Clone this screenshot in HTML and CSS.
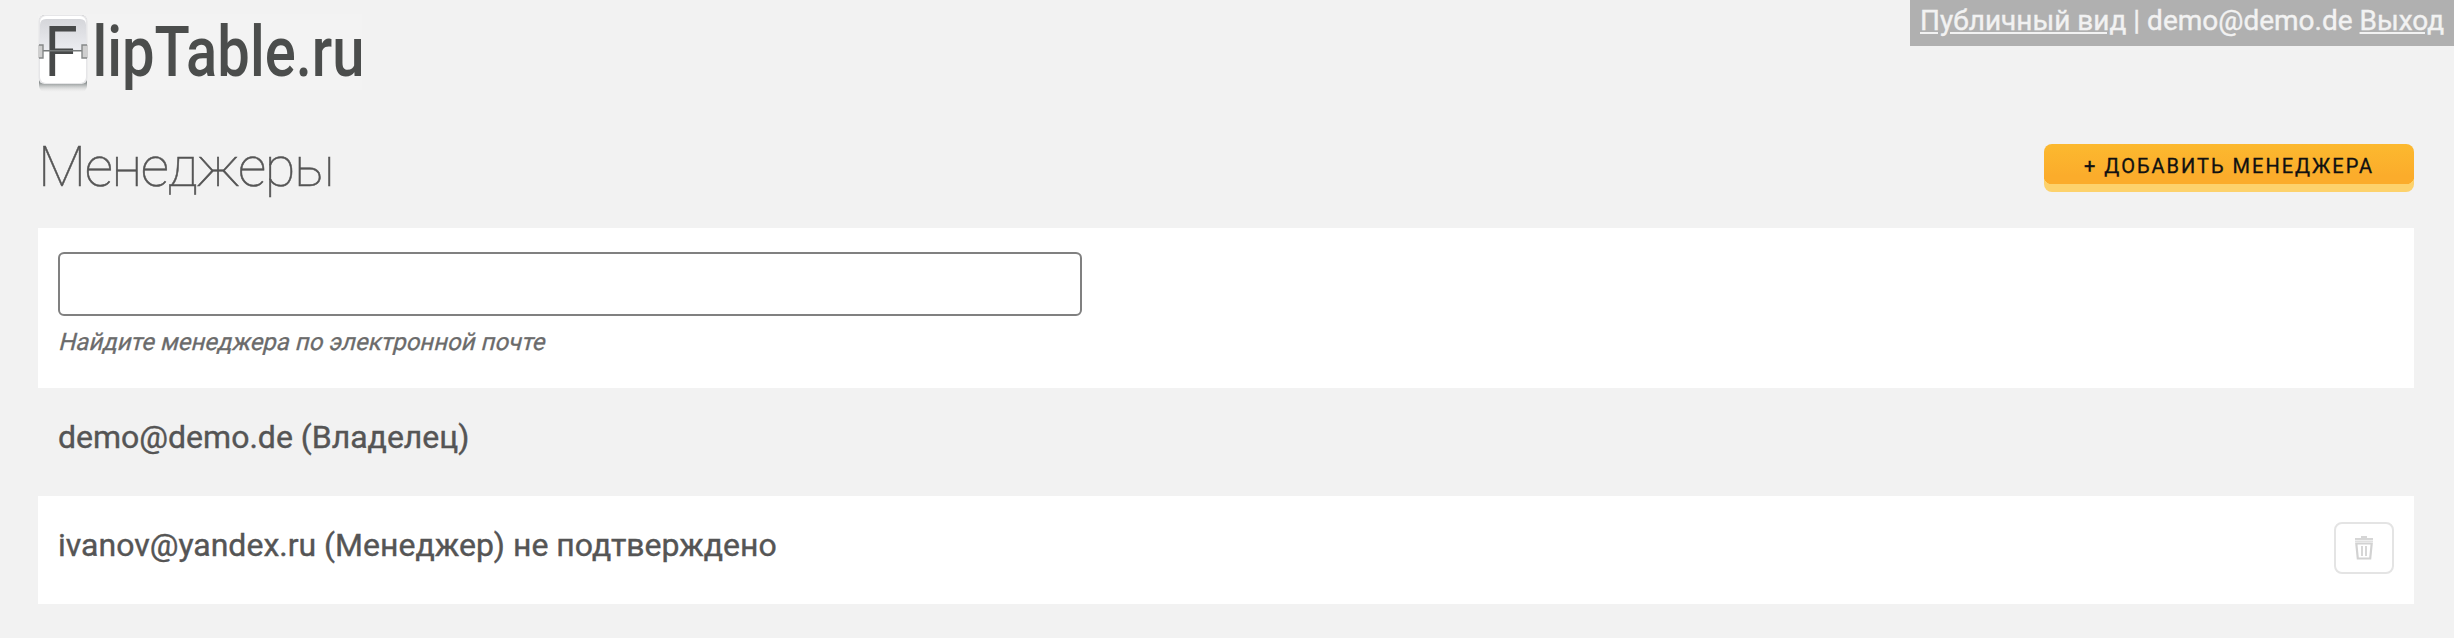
FILE: index.html
```html
<!DOCTYPE html>
<html lang="ru">
<head>
<meta charset="utf-8">
<title>Менеджеры</title>
<link rel="stylesheet" href="styles.css">
</head>
<body>
<nav class="userbar"><a href="#">Публичный вид</a> | demo@demo.de <a href="#">Выход</a></nav>
<div class="page">
  <header class="header">
    <svg class="logo" width="340" height="92" viewBox="0 -14 340 92" role="img">
      <defs>
        <linearGradient id="tile" x1="0" y1="0" x2="0" y2="1">
          <stop offset="0" stop-color="#d5d6da"/><stop offset="1" stop-color="#ecedf1"/>
        </linearGradient>
        <linearGradient id="shade" x1="0" y1="0" x2="0" y2="1">
          <stop offset="0.88" stop-color="#8a9090"/><stop offset="1" stop-color="#dcdcdc" stop-opacity="0"/>
        </linearGradient>
      </defs>
      <rect class="logo-bg" x="0" y="0" width="324" height="76"/>
      <rect x="1" y="1" width="48" height="77" rx="6" fill="url(#shade)"/>
      <rect x="0.500" y="1" width="49" height="69" rx="6" fill="#e6e6e8"/>
      <rect x="2" y="2" width="46" height="67" rx="6" fill="#fff"/>
      <path d="M2 37V11q0-6 6-6h34q6 0 6 6v26z" fill="url(#tile)"/>
      <text class="logo-f" transform="translate(6.500 62) scale(.86 1)">F</text>
      <path d="M5 36.800H45" stroke="#777b7b" stroke-width="1.600"/>
      <path d="M0 31h5v13H0zM44 31h6v13h-6z" fill="#cfcfcf"/>
      <path d="M1 31h4v13H1M49 31h-5v13h5" fill="none" stroke="#858888" stroke-width="1.400"/>
      <text class="logo-name" x="54.500" y="62" textLength="272" lengthAdjust="spacingAndGlyphs">lipTable.ru</text>
    </svg>
  </header>
  <div class="titlebar">
    <h1 class="title">Менеджеры</h1>
    <button class="add" type="button">+ Добавить менеджера</button>
  </div>
  <section class="search">
    <input class="search-input" type="text">
    <p class="hint">Найдите менеджера по электронной почте</p>
  </section>
  <div class="row">demo@demo.de (Владелец)</div>
  <div class="row row-white">ivanov@yandex.ru (Менеджер) не подтверждено
    <button class="trash" type="button">
      <svg width="18" height="24" viewBox="0 0 18 24">
        <path d="M6 0h6v2h6v4H0V2h6z" fill="#d6d6d6"/>
        <path d="M0 4.700h18" stroke="#eee" stroke-width="1.500"/>
        <path d="M1.300 7.500h15.400l-1.500 15H2.800z" fill="#fff" stroke="#d2d2d2" stroke-width="2.200"/>
        <path d="M7 10v10M11 10v10" stroke="#d6d6d6" stroke-width="2"/>
      </svg>
    </button>
  </div>
</div>
</body>
</html>
```
FILE: styles.css
```css
* { box-sizing: border-box; }
body { margin: 0; background: #f2f2f2; color: #555; font-family: Roboto, "Liberation Sans", sans-serif; }
.userbar { position: absolute; top: 0; right: 0; width: 544px; height: 46px; padding: 0 10px; background: #b0b0b0; color: #f2f2f2; font-size: 28px; line-height: 41px; white-space: nowrap; -webkit-text-stroke: 0.4px; }
.userbar a { color: inherit; }
.page { padding: 0 40px 0 38px; }
.header { height: 92px; }
.logo { display: block; overflow: visible; }
.logo-bg { fill: #f3f3f3; }
.logo-f { font: 400 70px Roboto, sans-serif; fill: #474949; }
.logo-name { font: 500 70px Roboto, sans-serif; fill: #4b4d4c; }
.titlebar { display: flex; justify-content: space-between; height: 136px; padding-top: 52px; }
.title { margin: -19px 0 0; font-size: 56px; font-weight: 100; line-height: 84px; letter-spacing: -1.35px; -webkit-text-stroke: 0.5px; }
.add {
  width: 370px; height: 48px; padding: 0 0 4px; border: 0; border-radius: 8px;
  background:
    radial-gradient(circle at 8px 0, #fbac2b 8px, transparent 8.5px) 0 32px / 8px 8px no-repeat,
    radial-gradient(circle at 0 0, #fbac2b 8px, transparent 8.5px) 100% 32px / 8px 8px no-repeat,
    linear-gradient(#fcb92f, #fbac2b) 0 0 / 100% 32px no-repeat,
    linear-gradient(#fbac2b, #fbac2b) 8px 32px / 354px 8px no-repeat,
    #fdd26c;
  color: #111; font: 400 20px/40px Roboto, sans-serif; letter-spacing: 2px; text-transform: uppercase; -webkit-text-stroke: 0.3px;
}
.search { height: 160px; padding: 24px 20px 0; background: #fff; }
.search-input { display: block; width: 1024px; height: 64px; border: 2px solid #808080; border-radius: 6px; background: #fff; }
.hint { width: max-content; margin: 10px 0 0; color: #6b6b6b; font-size: 24px; line-height: 32px; transform: skewX(-14deg); transform-origin: 0 24px; -webkit-text-stroke: 0.3px; }
.row { display: flex; justify-content: space-between; align-items: flex-start; height: 108px; padding: 26px 20px 0; font-size: 32px; line-height: 46px; -webkit-text-stroke: 0.4px; }
.row-white { background: #fff; }
.trash { display: flex; align-items: flex-start; justify-content: center; width: 60px; height: 52px; padding: 12px 0 0; border: 2px solid #e4e4e4; border-radius: 8px; background: #fff; }
```
